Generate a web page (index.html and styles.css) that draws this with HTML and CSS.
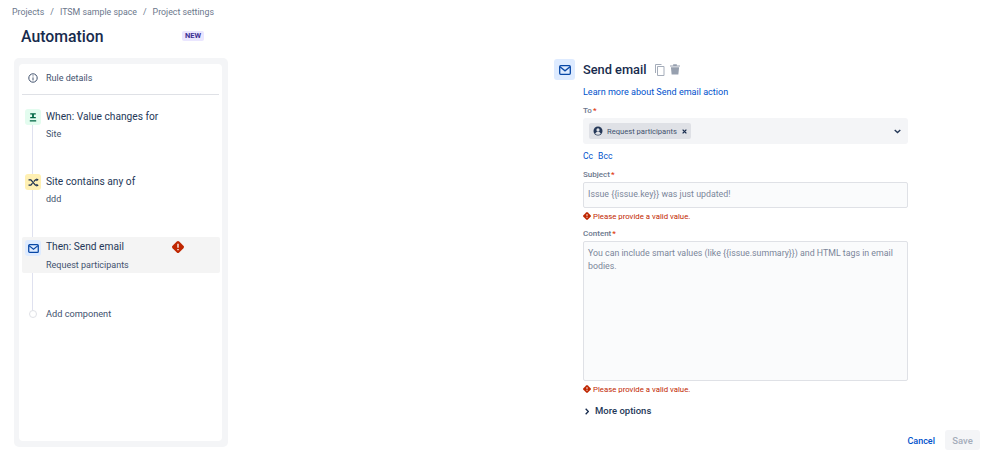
FILE: index.html
```html
<!DOCTYPE html>
<html lang="en">
<head>
<meta charset="utf-8">
<title>Automation</title>
<link rel="stylesheet" href="styles.css">
</head>
<body>
<div class="page">
  <aside class="side">
    <nav class="crumbs"><span>Projects</span><span class="sep">/</span><span>ITSM sample space</span><span class="sep">/</span><span>Project settings</span></nav>
    <div class="head"><h1>Automation</h1><span class="new">NEW</span></div>
    <div class="panel">
      <div class="card">
        <div class="details">
          <svg class="info" viewBox="0 0 10 10" width="10" height="10"><circle cx="5" cy="5" r="4.2" fill="none" stroke="#42526e" stroke-width="1"/><path d="M5 4.4v3M5 2.4v1" stroke="#42526e" stroke-width="1"/></svg>
          <span>Rule details</span>
        </div>
        <div class="rule-list">
          <div class="line"></div>
          <div class="rule r-when">
            <span class="ico green"><svg viewBox="0 0 10 12" width="8" height="11"><path d="M1.5 .8h7v1.6h-2.4v3h2.4v1.6H1.5V5.4h2.400v-3H1.500z" fill="#006644"/><path d="M1 9.400h8v1.600H1z" fill="#006644"/></svg></span>
            <div><div class="t">When: Value changes for</div><div class="s">Site</div></div>
          </div>
          <div class="rule r-if">
            <span class="ico yellow"><svg viewBox="0 0 12 10" width="11" height="9"><path d="M.5 2h2.600l5 6h1.600M.5 8h2.600l1.800-2.200M6.300 4 8.100 2h1.600" fill="none" stroke="#172b4d" stroke-width="1.300"/><path d="M9.300 .3 11.800 2 9.300 3.700zM9.300 6.300 11.800 8 9.300 9.700z" fill="#172b4d"/></svg></span>
            <div><div class="t">Site contains any of</div><div class="s">ddd</div></div>
          </div>
          <div class="rule r-then">
            <span class="ico blue"><svg viewBox="0 0 12 10" width="11" height="9"><rect x=".7" y=".7" width="10.600" height="8.600" rx="1" fill="none" stroke="#0747a6" stroke-width="1.400"/><path d="M1 1.800 6 5.800l5-4" fill="none" stroke="#0747a6" stroke-width="1.400"/></svg></span>
            <div><div class="t">Then: Send email</div><div class="s">Request participants</div></div>
            <svg class="warn" viewBox="0 0 12 12" width="12" height="12"><path d="M4.800 .6a1.700 1.700 0 0 1 2.400 0l4.200 4.200a1.700 1.700 0 0 1 0 2.400l-4.200 4.200a1.700 1.700 0 0 1-2.400 0L.6 7.200a1.700 1.700 0 0 1 0-2.400z" fill="#bf2600"/><path d="M6 2.800v4M6 8v1.300" stroke="#fff" stroke-width="1.300"/></svg>
          </div>
          <div class="rule r-add">
            <span class="dot"></span>
            <div class="add">Add component</div>
          </div>
        </div>
      </div>
    </div>
  </aside>
  <main class="main">
    <div class="form-wrap">
      <div class="title-row">
        <span class="big-ico"><svg viewBox="0 0 12 10" width="12" height="10"><rect x=".7" y=".7" width="10.600" height="8.600" rx="1" fill="none" stroke="#0747a6" stroke-width="1.300"/><path d="M1 1.800 6 5.800l5-4" fill="none" stroke="#0747a6" stroke-width="1.300"/></svg></span>
        <h2>Send email</h2>
        <svg class="act" viewBox="0 0 10 12" width="10" height="12"><path d="M2.500 2.500h6.500v9H2.500z" fill="none" stroke="#a5adba" stroke-width="1"/><path d="M.5 9V.5h6" fill="none" stroke="#a5adba" stroke-width="1"/></svg>
        <svg class="act" viewBox="0 0 11 12" width="10" height="11"><path d="M1 3.500h9l-.8 8H1.800zM0 1.500h11v1.300H0zM3.500.3h4v1.500h-4z" fill="#97a0af"/></svg>
      </div>
      <div class="body">
        <a class="learn">Learn more about Send email action</a>
        <label class="lbl l-to">To<i>*</i></label>
        <div class="select">
          <span class="chip">
            <svg viewBox="0 0 12 12" width="10" height="10"><circle cx="6" cy="6" r="5.400" fill="#253858"/><circle cx="6" cy="4.700" r="1.900" fill="#dfe1e6"/><path d="M2.600 9.600c.6-2 2-2.700 3.400-2.700s2.800.7 3.400 2.700C8 10.800 4 10.800 2.600 9.600z" fill="#dfe1e6"/></svg>
            <span>Request participants</span>
            <svg class="x" viewBox="0 0 8 8" width="5" height="5"><path d="M1 1l6 6M7 1 1 7" stroke="#172b4d" stroke-width="2"/></svg>
          </span>
          <svg class="chev" viewBox="0 0 10 6" width="7" height="5"><path d="M1 1l4 3.600L9 1" fill="none" stroke="#253858" stroke-width="2"/></svg>
        </div>
        <div class="ccbcc"><a>Cc</a><a>Bcc</a></div>
        <label class="lbl l-subj">Subject<i>*</i></label>
        <div class="input">Issue {{issue.key}} was just updated!</div>
        <div class="err"><svg viewBox="0 0 12 12" width="8" height="8"><path d="M4.800 .6a1.700 1.700 0 0 1 2.400 0l4.200 4.200a1.700 1.700 0 0 1 0 2.400l-4.200 4.200a1.700 1.700 0 0 1-2.400 0L.6 7.200a1.700 1.700 0 0 1 0-2.400z" fill="#bf2600"/><path d="M6 3v3.500M6 7.700v1.300" stroke="#fff" stroke-width="1.300"/></svg><span>Please provide a valid value.</span></div>
        <label class="lbl l-cont">Content<i>*</i></label>
        <div class="area">You can include smart values (like {{issue.summary}}) and HTML tags in email bodies.</div>
        <div class="err"><svg viewBox="0 0 12 12" width="8" height="8"><path d="M4.800 .6a1.700 1.700 0 0 1 2.400 0l4.200 4.200a1.700 1.700 0 0 1 0 2.400l-4.200 4.200a1.700 1.700 0 0 1-2.400 0L.6 7.200a1.700 1.700 0 0 1 0-2.400z" fill="#bf2600"/><path d="M6 3v3.500M6 7.700v1.300" stroke="#fff" stroke-width="1.300"/></svg><span>Please provide a valid value.</span></div>
        <div class="more"><svg viewBox="0 0 6 10" width="4" height="7"><path d="M1 1l4 4-4 4" fill="none" stroke="#172b4d" stroke-width="2"/></svg><span>More options</span></div>
      </div>
    </div>
    <div class="footer"><a class="cancel">Cancel</a><span class="save">Save</span></div>
  </main>
</div>
</body>
</html>
```
FILE: styles.css
```css
* { box-sizing: border-box; }
html, body { margin: 0; padding: 0; background: #fff; }
body { width: 998px; height: 468px; overflow: hidden; font-family: Roboto, "Noto Sans", sans-serif; color: #172b4d; }
.page { display: flex; height: 468px; }
.side { width: 240px; flex: none; }
.crumbs { display: flex; gap: 6px; padding: 6px 0 0 12px; height: 20px; font-size: 8.800px; line-height: 13px; color: #6b778c; white-space: nowrap; }
.head { display: flex; align-items: center; justify-content: space-between; height: 32px; padding: 1px 36px 0 21px; }
.head h1 { margin: 0; font-size: 15.800px; line-height: 20px; font-weight: 500; color: #172b4d; }
.new { background: #eae6ff; color: #403294; font-size: 7.500px; font-weight: 700; line-height: 10px; padding: 0 3px; border-radius: 2px; margin-top: -2px; }
.panel { margin: 6px 0 0 14px; width: 214px; height: 389px; background: #f4f5f7; border-radius: 5px; padding: 6px 6px 6px 5px; }
.card { background: #fff; height: 100%; border-radius: 4px; padding: 0 3px; }
.details { display: flex; align-items: center; gap: 8px; height: 31px; padding: 0 0 2px 6px; border-bottom: 1px solid #dfe1e6; font-size: 9px; color: #42526e; margin-bottom: 14px; }
.rule-list { position: relative; }
.line { position: absolute; left: 10px; top: 12px; width: 1px; height: 194px; background: #dfe1ef; }
.rule { position: relative; display: flex; gap: 5px; padding-left: 3px; }
.r-when { height: 65px; }
.r-if { height: 63px; }
.r-then { background: #f4f4f4; height: 36px; padding-top: 3px; border-radius: 2px; width: 198px; margin-bottom: 35px; }
.ico { flex: none; width: 16px; height: 16px; border-radius: 3px; display: flex; align-items: center; justify-content: center; }
.green { background: #e3fcef; }
.yellow { background: #fff0b3; }
.blue { background: #deebff; }
.t { font-size: 10.200px; line-height: 14px; margin-top: 1px; color: #253858; }
.s { font-size: 9px; line-height: 12px; margin-top: 4px; color: #42526e; }
.r-then .t { margin-top: 0; }
.r-then .s { margin-top: 5px; }
.warn { position: absolute; left: 150px; top: 4px; }
.r-add { align-items: center; padding-left: 7px; gap: 9px; }
.dot { width: 8px; height: 8px; border: 1px solid #dfe1e6; border-radius: 50%; background: #fff; }
.add { font-size: 9.200px; line-height: 12px; color: #42526e; }
.main { position: relative; flex: 1; padding-left: 314px; padding-top: 59px; }
.title-row { display: flex; align-items: center; height: 21px; }
.big-ico { width: 21px; height: 21px; background: #deebff; border-radius: 3px; display: flex; align-items: center; justify-content: center; margin-right: 8px; }
.title-row h2 { margin: 0; font-size: 12.800px; line-height: 20px; font-weight: 500; color: #172b4d; margin-right: 8px; }
.act { margin-right: 5px; }
.body { margin-left: 29px; width: 325px; padding-top: 6px; }
.learn { display: block; font-size: 9.050px; line-height: 12px; color: #0052cc; }
a { color: #0052cc; }
.lbl { display: block; font-size: 8px; line-height: 10px; font-weight: 500; color: #6b778c; }
.lbl i { color: #de350b; font-style: normal; margin-left: 1px; }
.l-to { margin-top: 8px; margin-bottom: 2px; }
.select { display: flex; align-items: center; justify-content: space-between; height: 26px; background: #f4f5f7; border-radius: 3px; padding: 0 7px 0 6px; }
.chip { display: flex; align-items: center; height: 16px; width: 102px; background: #dfe1e6; border-radius: 2px; padding: 0 4px; font-size: 7.600px; color: #42526e; gap: 4px; white-space: nowrap; }
.chip svg { flex: none; }
.chip .x { margin-left: 1px; }
.ccbcc { display: flex; gap: 5px; margin-top: 6px; font-size: 8.600px; line-height: 12px; }
.l-subj { margin-top: 8px; margin-bottom: 2px; }
.l-cont { margin-top: 7px; margin-bottom: 2px; }
.input { height: 26px; border: 1.500px solid #dfe1e6; border-radius: 2px; background: #fafbfc; font-size: 8.800px; line-height: 23px; padding-left: 4px; color: #7a869a; }
.err { display: flex; align-items: center; gap: 2px; height: 12px; margin-top: 2px; font-size: 7.800px; color: #bf2600; }
.area { height: 140px; border: 1.500px solid #dfe1e6; border-radius: 2px; background: #fafbfc; font-size: 8.800px; line-height: 13px; padding: 5px 12px 4px 4px; color: #7a869a; }
.more { display: flex; align-items: center; gap: 6px; margin-top: 10px; padding-left: 2px; font-size: 9.500px; line-height: 12px; font-weight: 500; color: #253858; }
.footer { position: absolute; right: 18px; top: 430px; display: flex; align-items: center; gap: 10px; height: 20px; }
.cancel { font-size: 9px; line-height: 12px; margin-top: 1px; font-weight: 500; color: #0052cc; }
.save { width: 35px; height: 20px; display: flex; align-items: center; justify-content: center; background: #f4f5f7; border-radius: 3px; font-size: 9.500px; font-weight: 500; color: #a5adba; }
```
